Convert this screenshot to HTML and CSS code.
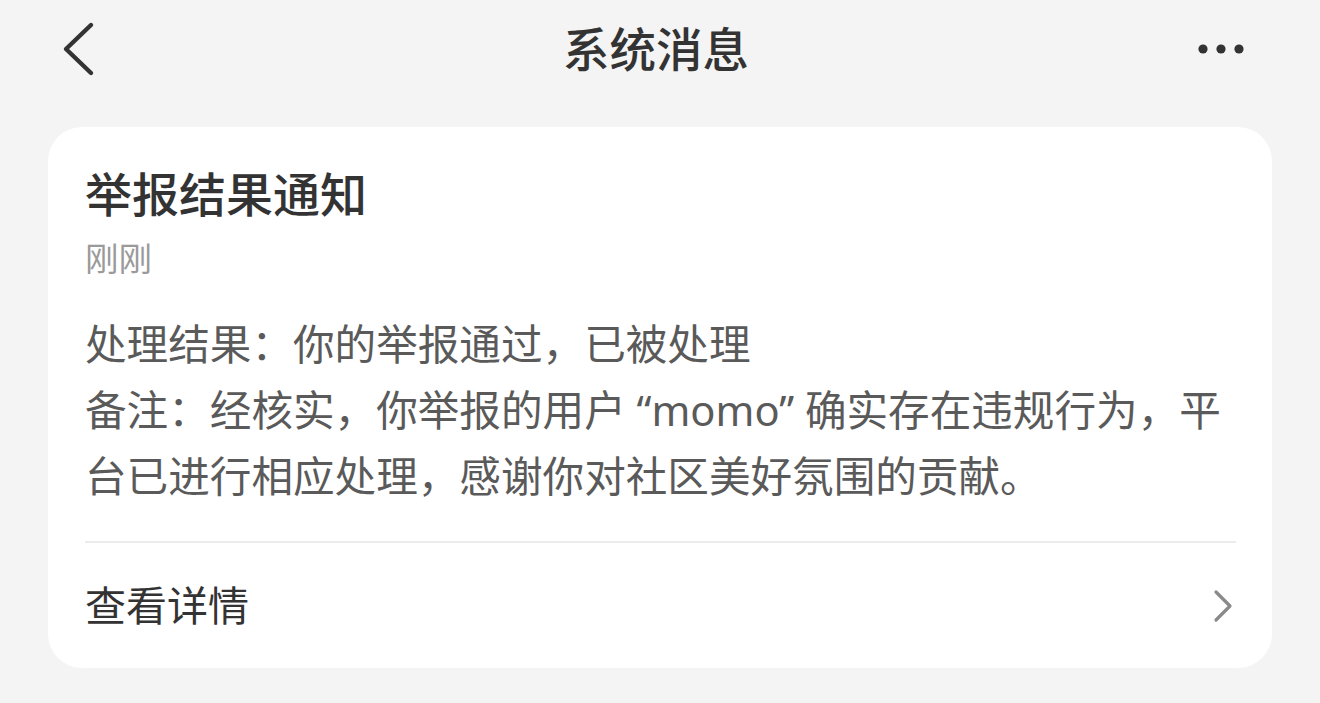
FILE: index.html
```html
<!DOCTYPE html>
<html lang="zh-CN">
<head>
    <meta charset="UTF-8">
    <meta name="viewport" content="width=device-width, initial-scale=1.0">
    <title>系统消息</title>
    <link rel="stylesheet" href="styles.css">
</head>
<body>
    <div class="navBar">
        <div class="navLeft">
            <svg class="backIcon" width="36" height="56" viewBox="0 0 36 56">
                <path d="M31 4 L6 28 L31 52" fill="none" stroke="#333" stroke-width="4.4" stroke-linecap="round" stroke-linejoin="round"/>
            </svg>
        </div>
        <div class="navTitle">系统消息</div>
        <div class="navRight">
            <svg class="moreIcon" width="54" height="12" viewBox="0 0 54 12">
                <circle cx="5" cy="6" r="4.6" fill="#333"/>
                <circle cx="23" cy="6" r="4.6" fill="#333"/>
                <circle cx="41" cy="6" r="4.6" fill="#333"/>
            </svg>
        </div>
    </div>

    <div class="msgCard">
        <div class="msgBody">
            <div class="msgTitle">举报结果通知</div>
            <div class="msgTime">刚刚</div>
            <div class="msgText">
                <p>处理结果：你的举报通过，已被处理</p>
                <p>备注：经核实，你举报的用户 “momo” 确实存在违规行为，平台已进行相应处理，感谢你对社区美好氛围的贡献。</p>
            </div>
        </div>
        <div class="msgLink">
            <span>查看详情</span>
            <svg class="arrowIcon" width="24" height="36" viewBox="0 0 24 36">
                <path d="M4 4 L18 18 L4 32" fill="none" stroke="#8a8a8a" stroke-width="3.2" stroke-linecap="round" stroke-linejoin="round"/>
            </svg>
        </div>
    </div>
</body>
</html>
```

FILE: styles.css
```css
*{
    padding: 0px;
    margin: 0px;
    box-sizing: border-box;
}
body{
    width: 1320px;
    height: 703px;
    background-color: #f4f4f4;
    font-family: "Noto Sans", "Noto Sans CJK SC", sans-serif;
    color: #333;
    overflow: hidden;
}
.navBar{
    height: 98px;
    display: grid;
    grid-template-columns: 1fr auto 1fr;
    align-items: center;
    padding: 0px 68px 0px 60px;
}
.navBar svg{
    display: block;
}
.navTitle{
    font-size: 46.5px;
    font-weight: 500;
    line-height: 56px;
    color: #333;
}
.navRight{
    display: flex;
    justify-content: flex-end;
}
.msgCard{
    margin: 29px 48px 0px;
    background-color: #fff;
    border-radius: 34px;
    padding: 0px 36px 0px 37px;
}
.msgBody{
    padding-top: 39px;
    padding-bottom: 32px;
    border-bottom: 2px solid #ececec;
}
.msgTitle{
    font-size: 47px;
    font-weight: 500;
    line-height: 56px;
    color: #333;
}
.msgTime{
    margin-top: 14px;
    font-size: 33.5px;
    line-height: 44px;
    color: #9a9a9a;
}
.msgText{
    margin-top: 31px;
    font-size: 41.6px;
    line-height: 66px;
    color: #5a5a5a;
}
.msgLink{
    height: 125px;
    padding-bottom: 6px;
    display: flex;
    align-items: center;
    justify-content: space-between;
    font-size: 41px;
    color: #333;
}
.msgLink .arrowIcon{
    display: block;
    margin-top: 6px;
}
```
